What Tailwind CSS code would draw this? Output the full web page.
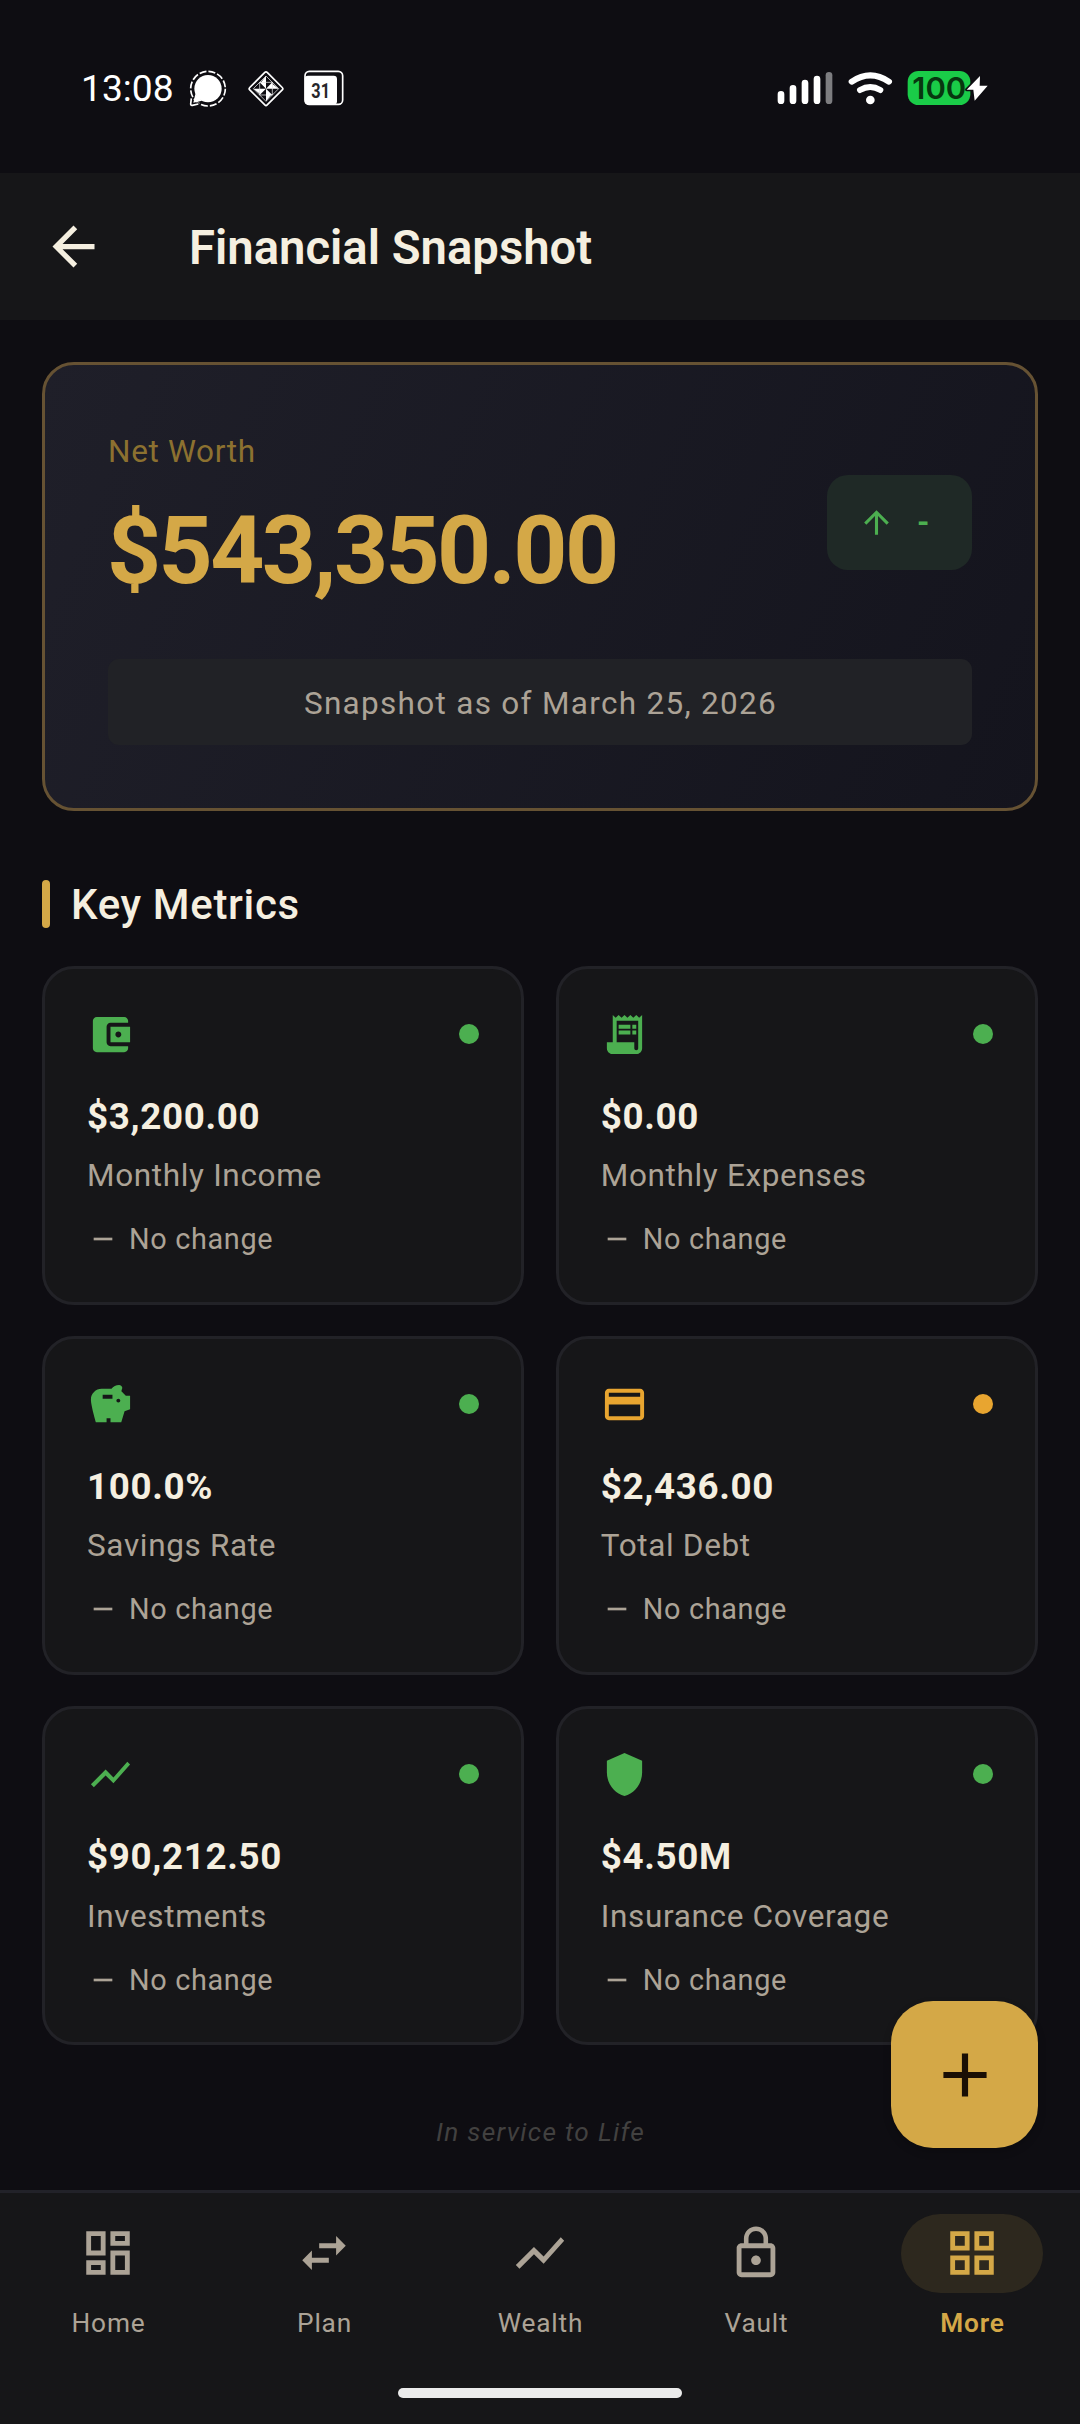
<!DOCTYPE html>
<html lang="en">
  <head>
    <meta charset="UTF-8" />
    <meta name="viewport" content="width=device-width, initial-scale=1.0" />
    <title>Financial Snapshot</title>
    <script src="https://cdn.jsdelivr.net/npm/@tailwindcss/browser@4"></script>
  </head>
  <body class="bg-[#0e0d12]">
    <!-- Icon sprite -->
    <svg class="hidden">
      <symbol id="i-back" viewBox="0 0 24 24"><path d="M20 11H7.83l5.59-5.59L12 4l-8 8 8 8 1.41-1.41L7.83 13H20v-2z" /></symbol>
      <symbol id="i-up" viewBox="0 0 24 24"><path d="M4 12l1.41 1.41L11 7.83V20h2V7.83l5.58 5.59L20 12l-8-8-8 8z" /></symbol>
      <symbol id="i-minus" viewBox="0 0 24 24"><path d="M19 13H5v-2h14v2z" /></symbol>
      <symbol id="i-plus" viewBox="0 0 24 24"><path d="M19 13h-6v6h-2v-6H5v-2h6V5h2v6h6v2z" /></symbol>
      <symbol id="i-wallet" viewBox="0 0 24 24"><path d="M21 18v1c0 1.1-.9 2-2 2H5c-1.11 0-2-.9-2-2V5c0-1.1.89-2 2-2h14c1.1 0 2 .9 2 2v1h-9c-1.11 0-2 .9-2 2v8c0 1.1.89 2 2 2h9zm-9-2h10V8H12v8zm4-2.5c-.83 0-1.5-.67-1.5-1.5s.67-1.5 1.5-1.5 1.5.67 1.5 1.5-.67 1.5-1.5 1.5z" /></symbol>
      <symbol id="i-receipt" viewBox="0 0 24 24"><path d="M19.5 3.5L18 2l-1.5 1.5L15 2l-1.5 1.5L12 2l-1.5 1.5L9 2 7.5 3.5 6 2v14H3v3c0 1.66 1.34 3 3 3h12c1.66 0 3-1.34 3-3V2l-1.5 1.5zM19 19c0 .55-.45 1-1 1s-1-.45-1-1v-3H8V5h11v14z" /><path d="M9 7h6v2H9zM16 7h2v2h-2zM9 10h6v2H9zM16 10h2v2h-2z" /></symbol>
      <symbol id="i-savings" viewBox="0 0 24 24"><path d="M19.83 7.5l-2.27-2.27c.07-.42.18-.81.32-1.15.11-.26.15-.56.09-.87-.13-.72-.83-1.22-1.57-1.21-1.59.03-3 .81-3.9 2h-5C4.46 4 2 6.46 2 9.5S4.5 21 4.5 21H10v-2h2v2h5.5l1.68-5.59 2.82-.94V7.5h-2.17zM13 9H8V7h5v2zm3 2c-.55 0-1-.45-1-1s.45-1 1-1 1 .45 1 1-.45 1-1 1z" /></symbol>
      <symbol id="i-card" viewBox="0 0 24 24"><path d="M20 4H4c-1.11 0-1.99.89-1.99 2L2 18c0 1.11.89 2 2 2h16c1.11 0 2-.89 2-2V6c0-1.11-.89-2-2-2zm0 14H4v-6h16v6zm0-10H4V6h16v2z" /></symbol>
      <symbol id="i-chart" viewBox="0 0 24 24"><path d="M3.5 18.49l6-6.01 4 4L22 6.92l-1.41-1.41-7.09 7.97-4-4L2 16.99z" /></symbol>
      <symbol id="i-shield" viewBox="0 0 24 24"><path d="M12 1L3 5v6c0 5.55 3.84 10.74 9 12 5.16-1.26 9-6.45 9-12V5l-9-4z" /></symbol>
      <symbol id="i-home" viewBox="0 0 24 24"><path d="M19 5v2h-4V5h4M9 5v6H5V5h4m10 8v6h-4v-6h4M9 17v2H5v-2h4M21 3h-8v6h8V3zM11 3H3v10h8V3zm10 8h-8v10h8V11zm-10 4H3v6h8v-6z" /></symbol>
      <symbol id="i-swap" viewBox="0 0 24 24"><path d="M6.99 11L3 15l3.99 4v-3H14v-2H6.99v-3zM21 9l-3.99-4v3H10v2h7.01v3L21 9z" /></symbol>
      <symbol id="i-lock" viewBox="0 0 24 24"><path d="M12 17c1.1 0 2-.9 2-2s-.9-2-2-2-2 .9-2 2 .9 2 2 2zm6-9h-1V6c0-2.76-2.24-5-5-5S7 3.24 7 6v2H6c-1.1 0-2 .9-2 2v10c0 1.1.9 2 2 2h12c1.1 0 2-.9 2-2V10c0-1.1-.9-2-2-2zM8.9 6c0-1.71 1.39-3.1 3.1-3.1s3.1 1.39 3.1 3.1v2H8.9V6zM18 20H6V10h12v10z" /></symbol>
      <symbol id="i-grid" viewBox="0 0 24 24"><path d="M3 3v8h8V3H3zm6 6H5V5h4v4zm-6 4v8h8v-8H3zm6 6H5v-4h4v4zm4-16v8h8V3h-8zm6 6h-4V5h4v4zm-6 4v8h8v-8h-8zm6 6h-4v-4h4v4z" /></symbol>
    </svg>

    <div class="relative w-[1080px] h-[2424px] flex flex-col overflow-hidden bg-[#0e0d12] font-['Roboto',sans-serif] text-[#f5efe0]">
      <!-- Status bar -->
      <div class="h-[173px] shrink-0 flex justify-between pt-[67px] pl-[81px] pr-[91px] text-white">
        <div class="flex items-start">
          <div class="w-[108px] text-[37.2px] leading-[42px] whitespace-nowrap">13:08</div>
          <svg class="w-[38px] h-[40px] mt-[2px]" viewBox="387 57 114 120">
            <circle cx="444" cy="116" r="52" fill="none" stroke="#fff" stroke-width="5" stroke-dasharray="21 6.2" />
            <path d="M391 145v20q0 4 4 3l22-6" fill="none" stroke="#0e0d12" stroke-width="12" />
            <path d="M394 145l-2 17q0 5 5 4l18-4" fill="none" stroke="#fff" stroke-width="5" />
            <circle cx="444" cy="116" r="41" fill="#fff" />
            <path d="M406 132l-6 26 26-6z" fill="#fff" />
          </svg>
          <svg class="w-[38px] h-[40px] ml-[20px] mt-[2px]" viewBox="561 57 114 120">
            <rect x="581" y="79" width="74" height="74" rx="5" fill="none" stroke="#fff" stroke-width="5" transform="rotate(45 618 116)" />
            <path d="M618 78v19h-15zM618 154v-19h15zM580 116h19v15zM656 116h-19v-15z" fill="#fff" />
            <path d="M599 97h19v19zM637 97v19h-19zM637 135h-19v-19zM599 135v-19h19z" fill="#fff" />
            <path d="M599 97h38v38h-38zM618 78l38 38-38 38-38-38z" fill="none" stroke="#fff" stroke-width="2" />
          </svg>
          <svg class="w-[40px] h-[40px] ml-[19px] mt-[2px]" viewBox="731 57 120 120">
            <rect x="734" y="64" width="113" height="99" rx="13" fill="none" stroke="#fff" stroke-width="5" />
            <path d="M745 72h85q9 0 9 9v76h-10V78h-84z" fill="#0e0d12" />
            <rect x="733" y="77" width="97" height="87" rx="10" fill="#fff" />
            <text x="753" y="143" textLength="56" lengthAdjust="spacingAndGlyphs" fill="#26262a" class="font-['Roboto',sans-serif] text-[58px] font-bold">31</text>
          </svg>
        </div>
        <svg class="w-[212px] h-[40px] mt-px" viewBox="112 54 636 120">
          <g stroke="#fff" stroke-width="20" stroke-linecap="round">
            <path d="M124 133v19M160 115v37M196 99v53M232 87v65" />
            <path d="M268 76v76" stroke="#7d7d80" />
          </g>
          <path d="M336 95q56-38 112 0M361 120q31-18 61 0" fill="none" stroke="#fff" stroke-width="18" stroke-linecap="round" />
          <circle cx="392" cy="150" r="13" fill="#fff" />
          <rect x="504" y="63" width="188" height="102" rx="32" fill="#1acc48" />
          <text x="518" y="147" textLength="162" lengthAdjust="spacingAndGlyphs" fill="#07360f" class="font-['Inter',sans-serif] text-[91px] font-semibold">100</text>
          <path d="M721 78l-40 41h20l4 33 39-45h-24z" fill="#fff" stroke="#0e0d12" stroke-width="9" stroke-linejoin="round" paint-order="stroke" />
        </svg>
      </div>

      <!-- App bar -->
      <header class="h-[147px] shrink-0 flex items-center bg-[#161618] pl-[42px]">
        <svg class="size-[63px] fill-current"><use href="#i-back" /></svg>
        <h1 class="ml-[84px] pt-[2px] text-[47.25px] leading-[56px] font-semibold">Financial Snapshot</h1>
      </header>

      <main class="px-[42px] pt-[42px]">
        <!-- Net worth -->
        <section class="h-[449px] rounded-[32px] border-[3px] border-[#665233] bg-[linear-gradient(114deg,#1f1f29,#14141d)] px-[63px] pt-[63px]">
          <div class="h-[189px] flex items-center justify-between">
            <div class="h-full pt-[5px]">
              <p class="text-[31.5px] leading-[38px] tracking-[0.656px] text-[#8c7130]">Net Worth</p>
              <p class="-ml-px mt-[25px] text-[94.5px] leading-[110px] tracking-[-2.65px] font-bold text-[#d4a847]">$543,350.00</p>
            </div>
            <div class="w-[145px] h-[95px] flex items-center rounded-[21px] bg-[#1f2926] pl-[31px] text-[#4caf50]">
              <svg class="size-[37px] fill-current"><use href="#i-up" /></svg>
              <span class="ml-[22px] text-[31.5px] leading-[38px] font-bold">-</span>
            </div>
          </div>
          <div class="mt-[42px] h-[86px] flex items-center justify-center rounded-[11px] bg-[#212226] pt-[3px] pl-px text-[31.5px] leading-[38px] tracking-[1.3px] text-[#aca396]">Snapshot as of March 25, 2026</div>
        </section>

        <!-- Key metrics -->
        <div class="mt-[69px] flex gap-[21px]">
          <div class="w-2 h-12 rounded-full bg-[#d4a847]"></div>
          <h2 class="pt-px h-12 text-[42px] leading-[48px] tracking-[0.656px] font-medium">Key Metrics</h2>
        </div>

        <div class="mt-[38px] grid grid-cols-2 auto-rows-[338.7px] gap-[31.5px]">
          <div class="rounded-[32px] border-[3px] border-[#222227] bg-[#161618] px-[42px] pt-[42px]">
            <div class="flex items-center justify-between">
              <svg class="size-[47px] fill-[#4caf50]"><use href="#i-wallet" /></svg>
              <span class="mb-px size-[20px] rounded-full bg-[#4caf50]"></span>
            </div>
            <p class="mt-[37px] text-[36.75px] leading-[44px] tracking-[0.656px] font-bold">$3,200.00</p>
            <p class="mt-[18px] text-[31.5px] leading-[38px] tracking-[0.656px] text-[#aca396]">Monthly Income</p>
            <p class="mt-[27px] flex items-center gap-[10px] text-[28.875px] leading-[34px] tracking-[0.656px] text-[#aca396]">
              <svg class="size-[32px] fill-current"><use href="#i-minus" /></svg>No change
            </p>
          </div>
          <div class="rounded-[32px] border-[3px] border-[#222227] bg-[#161618] px-[42px] pt-[42px]">
            <div class="flex items-center justify-between">
              <svg class="size-[47px] fill-[#4caf50]"><use href="#i-receipt" /></svg>
              <span class="mb-px size-[20px] rounded-full bg-[#4caf50]"></span>
            </div>
            <p class="mt-[37px] text-[36.75px] leading-[44px] tracking-[0.656px] font-bold">$0.00</p>
            <p class="mt-[18px] text-[31.5px] leading-[38px] tracking-[0.656px] text-[#aca396]">Monthly Expenses</p>
            <p class="mt-[27px] flex items-center gap-[10px] text-[28.875px] leading-[34px] tracking-[0.656px] text-[#aca396]">
              <svg class="size-[32px] fill-current"><use href="#i-minus" /></svg>No change
            </p>
          </div>
          <div class="rounded-[32px] border-[3px] border-[#222227] bg-[#161618] px-[42px] pt-[42px]">
            <div class="flex items-center justify-between">
              <svg class="size-[47px] fill-[#4caf50]"><use href="#i-savings" /></svg>
              <span class="mb-px size-[20px] rounded-full bg-[#4caf50]"></span>
            </div>
            <p class="mt-[37px] text-[36.75px] leading-[44px] tracking-[0.656px] font-bold">100.0%</p>
            <p class="mt-[18px] text-[31.5px] leading-[38px] tracking-[0.656px] text-[#aca396]">Savings Rate</p>
            <p class="mt-[27px] flex items-center gap-[10px] text-[28.875px] leading-[34px] tracking-[0.656px] text-[#aca396]">
              <svg class="size-[32px] fill-current"><use href="#i-minus" /></svg>No change
            </p>
          </div>
          <div class="rounded-[32px] border-[3px] border-[#222227] bg-[#161618] px-[42px] pt-[42px]">
            <div class="flex items-center justify-between">
              <svg class="size-[47px] fill-[#e8a530]"><use href="#i-card" /></svg>
              <span class="mb-px size-[20px] rounded-full bg-[#e8a530]"></span>
            </div>
            <p class="mt-[37px] text-[36.75px] leading-[44px] tracking-[0.656px] font-bold">$2,436.00</p>
            <p class="mt-[18px] text-[31.5px] leading-[38px] tracking-[0.656px] text-[#aca396]">Total Debt</p>
            <p class="mt-[27px] flex items-center gap-[10px] text-[28.875px] leading-[34px] tracking-[0.656px] text-[#aca396]">
              <svg class="size-[32px] fill-current"><use href="#i-minus" /></svg>No change
            </p>
          </div>
          <div class="rounded-[32px] border-[3px] border-[#222227] bg-[#161618] px-[42px] pt-[42px]">
            <div class="flex items-center justify-between">
              <svg class="size-[47px] fill-[#4caf50]"><use href="#i-chart" /></svg>
              <span class="mb-px size-[20px] rounded-full bg-[#4caf50]"></span>
            </div>
            <p class="mt-[37px] text-[36.75px] leading-[44px] tracking-[0.656px] font-bold">$90,212.50</p>
            <p class="mt-[19px] text-[31.5px] leading-[38px] tracking-[0.656px] text-[#aca396]">Investments</p>
            <p class="mt-[27px] flex items-center gap-[10px] text-[28.875px] leading-[34px] tracking-[0.656px] text-[#aca396]">
              <svg class="size-[32px] fill-current"><use href="#i-minus" /></svg>No change
            </p>
          </div>
          <div class="rounded-[32px] border-[3px] border-[#222227] bg-[#161618] px-[42px] pt-[42px]">
            <div class="flex items-center justify-between">
              <svg class="size-[47px] fill-[#4caf50]"><use href="#i-shield" /></svg>
              <span class="mb-px size-[20px] rounded-full bg-[#4caf50]"></span>
            </div>
            <p class="mt-[37px] text-[36.75px] leading-[44px] tracking-[0.656px] font-bold">$4.50M</p>
            <p class="mt-[19px] text-[31.5px] leading-[38px] tracking-[0.656px] text-[#aca396]">Insurance Coverage</p>
            <p class="mt-[27px] flex items-center gap-[10px] text-[28.875px] leading-[34px] tracking-[0.656px] text-[#aca396]">
              <svg class="size-[32px] fill-current"><use href="#i-minus" /></svg>No change
            </p>
          </div>
        </div>

        <p class="mt-[71px] pl-px text-center text-[26.25px] leading-[32px] tracking-[1.3px] italic text-[#424140]">In service to Life</p>
      </main>

      <!-- Add button -->
      <button class="absolute left-[891px] top-[2001px] size-[147px] flex items-center justify-center rounded-[42px] bg-[#d4a847] text-[#1a0f05] shadow-[0_4px_8px_rgba(0,0,0,0.2)]">
        <svg class="size-[74px] fill-current"><use href="#i-plus" /></svg>
      </button>

      <!-- Bottom navigation -->
      <nav class="mt-auto h-[234px] shrink-0 border-t-[3px] border-[#222229] bg-[#161618] pt-[21px] text-[26.25px] leading-[32px] tracking-[0.8px] text-[#aca396]">
        <div class="grid grid-cols-5">
          <a class="flex flex-col items-center gap-[14px]">
            <span class="w-[142px] h-[79px] flex items-start justify-center pt-[10px]"><svg class="size-[58px] fill-current"><use href="#i-home" /></svg></span>
            <span class="pl-px">Home</span>
          </a>
          <a class="flex flex-col items-center gap-[14px]">
            <span class="w-[142px] h-[79px] flex items-start justify-center pt-[10px]"><svg class="size-[58px] fill-current"><use href="#i-swap" /></svg></span>
            <span class="pl-px">Plan</span>
          </a>
          <a class="flex flex-col items-center gap-[14px]">
            <span class="w-[142px] h-[79px] flex items-start justify-center pt-[10px]"><svg class="size-[58px] fill-current"><use href="#i-chart" /></svg></span>
            <span class="pl-px">Wealth</span>
          </a>
          <a class="flex flex-col items-center gap-[14px]">
            <span class="w-[142px] h-[79px] flex items-start justify-center pt-[10px]"><svg class="size-[58px] fill-current"><use href="#i-lock" /></svg></span>
            <span class="pl-px">Vault</span>
          </a>
          <a class="flex flex-col items-center gap-[14px] font-semibold text-[#d4a847]">
            <span class="w-[142px] h-[79px] flex items-start justify-center rounded-full bg-[#2d281e] pt-[10px]"><svg class="size-[58px] fill-current"><use href="#i-grid" /></svg></span>
            <span class="pl-px">More</span>
          </a>
        </div>
        <div class="mx-auto mt-[49px] w-[284px] h-[10px] rounded-full bg-[#ebebeb]"></div>
      </nav>
    </div>
  </body>
</html>
